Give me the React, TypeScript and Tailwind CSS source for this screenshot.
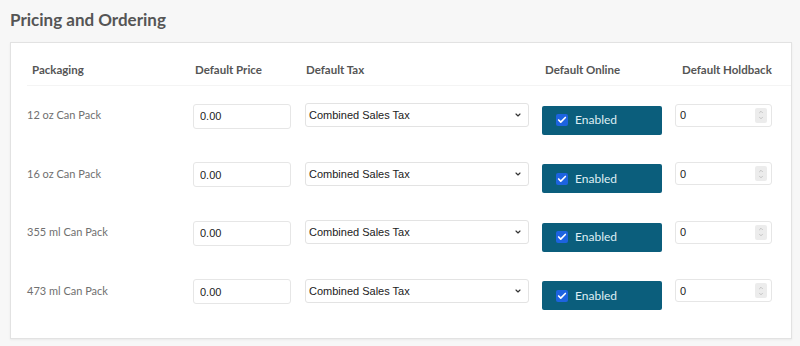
import { ChevronDown, ChevronUp, Check } from "lucide-react";

const PACKS = ["12 oz Can Pack", "16 oz Can Pack", "355 ml Can Pack", "473 ml Can Pack"];

const cols = "grid grid-cols-[166px_112px_237px_133px_110px]";

function HoldbackInput() {
  return (
    <div className="relative w-[97px] h-[23px] bg-white border border-[#e6e6e6] rounded-[3px] flex items-center">
      <span className="pl-[4px] text-[11px] text-[#222] font-['Liberation_Sans',sans-serif]">0</span>
      {/* fake spin buttons */}
      <div className="absolute right-[4px] top-[3px] w-[12px] h-[15px] bg-[#ececec] rounded-[2px] flex flex-col items-center justify-center">
        <ChevronUp className="w-[8px] h-[6px] text-[#9a9a9a]" strokeWidth={2} />
        <ChevronDown className="w-[8px] h-[6px] text-[#9a9a9a]" strokeWidth={2} />
      </div>
    </div>
  );
}

function Row({ label }: { label: string }) {
  return (
    <div className={`${cols} h-[58.5px] items-center`}>
      <div className="text-[11px] text-[#707070] font-['Lato',sans-serif]">{label}</div>
      <div>
        <input
          readOnly
          value="0.00"
          className="w-[98px] h-[25px] px-[6px] bg-white border border-[#e6e6e6] rounded-[3px] text-[11px] text-[#222] font-['Liberation_Sans',sans-serif] outline-none"
        />
      </div>
      <div>
        <div className="w-[224px] h-[24px] pl-[3px] pr-[6px] bg-white border border-[#e3e3e3] rounded-[3px] flex items-center justify-between">
          <span className="text-[11px] text-[#222] font-['Liberation_Sans',sans-serif]">Combined Sales Tax</span>
          <ChevronDown className="w-[8px] h-[8px] text-[#333]" strokeWidth={3.5} />
        </div>
      </div>
      <div>
        <div className="mt-[10px] w-[120px] h-[29px] bg-[#0b5e7c] rounded-[2px] flex items-center pl-[14px] gap-[7px]">
          <span className="w-[12px] h-[12px] bg-[#1d63e0] rounded-[2px] flex items-center justify-center">
            <Check className="w-[10px] h-[10px] text-white" strokeWidth={4} />
          </span>
          <span className="text-[12px] text-[#dfeef4] font-['Lato',sans-serif]">Enabled</span>
        </div>
      </div>
      <div>
        <HoldbackInput />
      </div>
    </div>
  );
}

export default function App() {
  return (
    <div className="w-[800px] h-[346px] bg-[#f7f7f7] overflow-hidden font-['Lato',sans-serif]">
      <h2 className="pl-[10px] pt-[7px] h-[42px] text-[17px] font-bold text-[#555]">Pricing and Ordering</h2>
      <div className="ml-[10px] w-[782px] bg-white border border-[#e2e2e2] shadow-[0_1px_2px_rgba(0,0,0,0.06)] pl-[16px] pt-[11px] pb-[18px]">
        <div className={`${cols} h-[32px] items-center border-b border-[#f4f4f4] text-[11.5px] font-bold text-[#555]`}>
          <div className="pl-[5px]">Packaging</div>
          <div className="pl-[2px]">Default Price</div>
          <div className="pl-[1px]">Default Tax</div>
          <div className="pl-[3px]">Default Online</div>
          <div className="pl-[7px]">Default Holdback</div>
        </div>
        {PACKS.map(p => (
          <Row key={p} label={p} />
        ))}
      </div>
    </div>
  );
}
